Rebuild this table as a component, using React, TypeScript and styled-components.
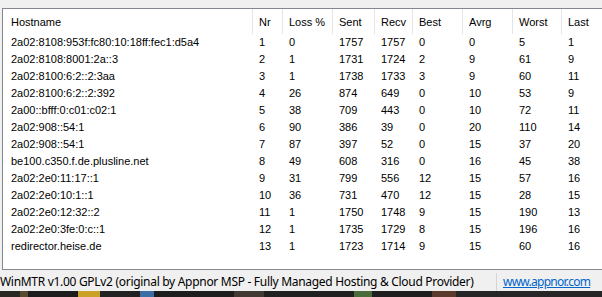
import React from "react";
import styled, { createGlobalStyle } from "styled-components";

const GlobalStyle = createGlobalStyle`
  html, body { margin: 0; padding: 0; background: #f0f0f0; overflow: hidden; }
`;

const COLS = "250px 30px 50px 42px 38px 50px 50px 49px 80px";

const Window = styled.div`
  width: 602px;
  height: 297px;
  display: flex;
  flex-direction: column;
  background: #f0f0f0;
  overflow: hidden;
`;

const TopGap = styled.div`
  height: 8px;
  flex: none;
`;

const ListBox = styled.div`
  margin-left: 2px;
  height: 260px;
  flex: none;
  background: #fff;
  border: 1px solid #828790;
  border-right: none;
  font-family: "Liberation Sans", Arial, sans-serif;
  font-size: 11px;
  color: #000;
  overflow: hidden;
`;

const Grid = styled.div`
  display: grid;
  grid-template-columns: ${COLS};
`;

const HeaderCell = styled.div<{ $first?: boolean }>`
  height: 25px;
  display: flex;
  align-items: center;
  padding-left: ${(p) => (p.$first ? 8 : 6)}px;
  border-right: 1px solid #e5e5e5;
  white-space: nowrap;
  box-sizing: border-box;
`;

const Cell = styled.div<{ $first?: boolean }>`
  height: 17px;
  line-height: 17px;
  padding-left: ${(p) => (p.$first ? 8 : 6)}px;
  white-space: nowrap;
  box-sizing: border-box;
`;

const StatusBar = styled.div`
  height: 21px;
  flex: none;
  display: flex;
  align-items: flex-end;
  font-family: "Noto Sans", "Open Sans", sans-serif;
  font-size: 12px;
  color: #000;
`;

const StatusText = styled.div`
  width: 496px;
  flex: none;
  padding-bottom: 1px;
  white-space: nowrap;
  letter-spacing: -0.3px;
`;

const StatusSep = styled.div`
  width: 1px;
  height: 18px;
  background: #d5d5d5;
  flex: none;
  align-self: flex-end;
`;

const Link = styled.a`
  margin-left: 6px;
  padding-bottom: 1px;
  color: #0066cc;
  text-decoration: underline;
  white-space: nowrap;
  letter-spacing: -0.75px;
`;

const Strip = styled.div`
  height: 6px;
  flex: none;
  display: flex;
  background: #2a2622;
`;

const Patch = styled.div<{ $w: number; $c: string }>`
  width: ${(p) => p.$w}px;
  background: ${(p) => p.$c};
  flex: none;
`;

const headers = ["Hostname", "Nr", "Loss %", "Sent", "Recv", "Best", "Avrg", "Worst", "Last"];

const rows: string[][] = [
  ["2a02:8108:953f:fc80:10:18ff:fec1:d5a4", "1", "0", "1757", "1757", "0", "0", "5", "1"],
  ["2a02:8108:8001:2a::3", "2", "1", "1731", "1724", "2", "9", "61", "9"],
  ["2a02:8100:6:2::2:3aa", "3", "1", "1738", "1733", "3", "9", "60", "11"],
  ["2a02:8100:6:2::2:392", "4", "26", "874", "649", "0", "10", "53", "9"],
  ["2a00::bfff:0:c01:c02:1", "5", "38", "709", "443", "0", "10", "72", "11"],
  ["2a02:908::54:1", "6", "90", "386", "39", "0", "20", "110", "14"],
  ["2a02:908::54:1", "7", "87", "397", "52", "0", "15", "37", "20"],
  ["be100.c350.f.de.plusline.net", "8", "49", "608", "316", "0", "16", "45", "38"],
  ["2a02:2e0:11:17::1", "9", "31", "799", "556", "12", "15", "57", "16"],
  ["2a02:2e0:10:1::1", "10", "36", "731", "470", "12", "15", "28", "15"],
  ["2a02:2e0:12:32::2", "11", "1", "1750", "1748", "9", "15", "190", "13"],
  ["2a02:2e0:3fe:0:c::1", "12", "1", "1735", "1729", "8", "15", "196", "16"],
  ["redirector.heise.de", "13", "1", "1723", "1714", "9", "15", "60", "16"],
];

const patches: [number, string][] = [
  [20, "#2a2622"], [8, "#5a4a30"], [50, "#1c1c1c"], [22, "#c9a227"], [40, "#222"],
  [14, "#3b6ea5"], [80, "#1d1d1d"], [30, "#403a33"], [90, "#202020"], [18, "#4a6b3a"],
  [60, "#1e1e1e"], [24, "#5b3b2b"], [146, "#262626"],
];

export default function App() {
  return (
    <>
      <GlobalStyle />
      <Window>
        <TopGap />
        <ListBox>
          <Grid>
            {headers.map((h, i) => (
              <HeaderCell key={h} $first={i === 0}>{h}</HeaderCell>
            ))}
            {rows.map((r, ri) =>
              r.map((v, ci) => (
                <Cell key={`${ri}-${ci}`} $first={ci === 0}>{v}</Cell>
              ))
            )}
          </Grid>
        </ListBox>
        <StatusBar>
          <StatusText>WinMTR v1.00 GPLv2 (original by Appnor MSP - Fully Managed Hosting &amp; Cloud Provider)</StatusText>
          <StatusSep />
          <Link href="#">www.appnor.com</Link>
        </StatusBar>
        <Strip>
          {patches.map(([w, c], i) => (
            <Patch key={i} $w={w} $c={c} />
          ))}
        </Strip>
      </Window>
    </>
  );
}
